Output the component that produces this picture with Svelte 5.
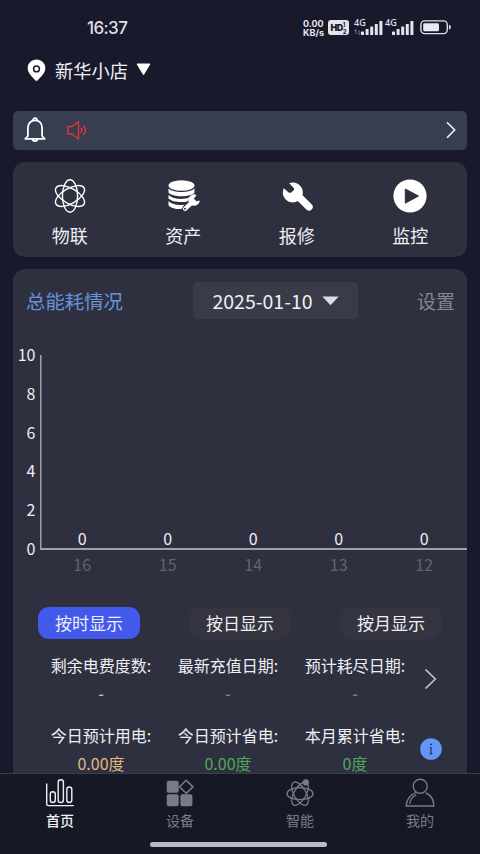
<script>
    let mode = $state('按时显示');
    let tab = $state('home');

    const menu = [
        { icon: 'atom', label: '物联' },
        { icon: 'asset', label: '资产' },
        { icon: 'repair', label: '报修' },
        { icon: 'monitor', label: '监控' },
    ];
    const ticks = [10, 8, 6, 4, 2, 0];
    const bars = [
        { hour: 16, value: 0 },
        { hour: 15, value: 0 },
        { hour: 14, value: 0 },
        { hour: 13, value: 0 },
        { hour: 12, value: 0 },
    ];
    const modes = ['按时显示', '按日显示', '按月显示'];
    const stats = [
        [
            { label: '剩余电费度数:', value: '-', warm: true },
            { label: '最新充值日期:', value: '-' },
            { label: '预计耗尽日期:', value: '-' },
        ],
        [
            { label: '今日预计用电:', value: '0.00度', warm: true },
            { label: '今日预计省电:', value: '0.00度' },
            { label: '本月累计省电:', value: '0度' },
        ],
    ];
    const tabs = [
        { id: 'home', label: '首页' },
        { id: 'device', label: '设备' },
        { id: 'smart', label: '智能' },
        { id: 'mine', label: '我的' },
    ];
</script>

{#snippet signal()}
    <svg width="22" height="14" viewBox="0 0 22 14" fill="#e3e4ec">
        <rect x="0" y="10.5" width="3" height="3.5" rx=".6" />
        <rect x="4.6" y="8" width="3" height="6" rx=".6" />
        <rect x="9.2" y="5.5" width="3" height="8.5" rx=".6" />
        <rect x="13.8" y="3" width="3" height="11" rx=".6" />
        <rect x="18.4" y="0" width="3" height="14" rx=".6" />
    </svg>
{/snippet}

<div class="screen">
    <header class="status">
        <span class="clock">16:37</span>
        <div class="status-icons">
            <div class="speed"><span>0.00</span><span>KB/s</span></div>
            <div class="hd"><b>HD</b><span class="sim"><i>1</i><i>2</i></span></div>
            <div class="net">
                <span class="gen">4G</span>
                <svg class="updown" width="7" height="6" viewBox="0 0 7 6" fill="none" stroke="#777987">
                    <path d="M.3 2 2 .5V5M6.7 4 5 5.5V1" />
                </svg>
                {@render signal()}
            </div>
            <div class="net second">
                <span class="gen">4G</span>
                {@render signal()}
            </div>
            <svg class="battery" width="32" height="15" viewBox="0 0 32 15">
                <rect x=".9" y=".9" width="26.4" height="12.7" rx="3.8" fill="none" stroke="#dfe0e8" stroke-width="1.4" />
                <rect x="3.2" y="3.2" width="15.8" height="8.1" rx="1.4" fill="#e9eaf0" />
                <path d="M29 4.8q1.8.4 1.8 2.4t-1.8 2.4z" fill="#dfe0e8" />
            </svg>
        </div>
    </header>

    <div class="shop">
        <svg width="19" height="23" viewBox="0 0 19 23">
            <path d="M9.5.6C4.5.6.7 4.2.7 9c0 5.2 4.6 9 7.3 12q1.5 1.7 3 0c2.7-3 7.3-6.8 7.3-12C18.3 4.2 14.5.6 9.5.6z" fill="#fff" />
            <circle cx="9.5" cy="9.9" r="2.9" fill="none" stroke="#1c1c2e" stroke-width="1.5" />
        </svg>
        <span>新华小店</span>
        <svg class="caret" width="15" height="13" viewBox="0 0 15 13">
            <path d="M1.5 1.2h12L7.5 11z" fill="#fff" stroke="#fff" stroke-width="1.5" stroke-linejoin="round" />
        </svg>
    </div>

    <div class="notice">
        <svg width="22" height="26" viewBox="0 0 22 26" fill="none" stroke="#fff" stroke-width="1.8" stroke-linejoin="round" stroke-linecap="round">
            <path d="M9 3.2a2 2 0 0 1 4 0" />
            <path d="M3.9 19V11C3.9 6.4 6.9 3.4 11 3.4s7.1 3 7.1 7.6v8l2.6 2.8H1.3z" />
            <path d="M8.6 22.8q2.4 2.6 4.8 0" />
        </svg>
        <svg class="horn" width="20" height="20" viewBox="0 0 20 20" fill="none" stroke="#e0363a" stroke-width="1.4" stroke-linejoin="round" stroke-linecap="round">
            <path d="M1 6.5h4.2l6.3-5v17.500l-6.300-5H1z" />
            <path d="M14 8q1.7 2.2 0 4.500M16.700 6q3.600 4.200 0 8.500" />
        </svg>
        <svg class="go" width="10" height="18" viewBox="0 0 10 18" fill="none" stroke="#f1f3f6" stroke-width="1.6">
            <path d="M1 1.3 8.7 9 1 16.7" />
        </svg>
    </div>

    <nav class="menu">
        {#each menu as item}
            <div class="menu-item">
                {#if item.icon === 'atom'}
                    <svg width="36" height="36" viewBox="-18 -18 36 36" fill="none" stroke="#fff" stroke-width="1.4">
                        <ellipse rx="7.6" ry="16.2" />
                        <ellipse rx="7.6" ry="16.2" transform="rotate(60)" />
                        <ellipse rx="7.6" ry="16.2" transform="rotate(120)" />
                    </svg>
                {:else if item.icon === 'asset'}
                    <svg width="36" height="36" viewBox="0 0 36 36" fill="#fff">
                        <ellipse cx="16.5" cy="7.5" rx="13" ry="5.3" />
                        <path d="M3.5 10.2c4 5 22 5 26 0v4.2c-4 5-22 5-26 0z" />
                        <path d="M3.5 16.8c4 4.7 15 5.2 21.5 2.5l-2.6 4.2c-6.5 1.3-15.4.6-18.9-2.9z" />
                        <path d="M3.5 23.1c3 3.3 10 4.5 16 3.7l-3.2 4.3c-5.5 0-10.8-1.2-12.8-3.9z" />
                        <path d="M20 31 28 23.5" stroke="#2f303f" stroke-width="6.5" />
                        <path d="m20 30.8 7-6.5" stroke="#fff" stroke-width="4.3" stroke-linecap="round" />
                        <path d="M31.5 16.9a5.7 5.7 0 1 0 3.3 5.6l-3.3.8-2.7-2.6z" />
                        <circle cx="20" cy="30.7" r="1" fill="#2f303f" />
                    </svg>
                {:else if item.icon === 'repair'}
                    <svg width="36" height="36" viewBox="0 0 36 36" fill="#fff">
                        <path d="m19 18 11 10.8" stroke="#fff" stroke-width="7.4" stroke-linecap="round" />
                        <path d="M10.2 5.2A10 10 0 1 1 4.8 10.2l5.2 4.6h2l3-2.8v-1.7z" />
                    </svg>
                {:else}
                    <svg width="36" height="36" viewBox="0 0 36 36">
                        <circle cx="18" cy="18" r="16.6" fill="#fff" />
                        <path d="M13.3 11v14.2L26.5 18z" fill="#2f303f" stroke="#2f303f" stroke-linejoin="round" />
                    </svg>
                {/if}
                <span>{item.label}</span>
            </div>
        {/each}
    </nav>

    <section class="energy">
        <div class="energy-head">
            <h2>总能耗情况</h2>
            <div class="date">
                2025-01-10
                <svg width="17" height="10" viewBox="0 0 17 10"><path d="M.3.5h16.4L8.5 9.3z" fill="#dcdde2" /></svg>
            </div>
            <span class="set">设置</span>
        </div>

        <div class="chart">
            <div class="y-axis">
                {#each ticks as tick}
                    <span>{tick}</span>
                {/each}
            </div>
            <div class="plot">
                <div class="bars">
                    {#each bars as bar}
                        <span>{bar.value}</span>
                    {/each}
                </div>
                <div class="x-axis">
                    {#each bars as bar}
                        <span>{bar.hour}</span>
                    {/each}
                </div>
            </div>
        </div>

        <div class="modes">
            {#each modes as m}
                <button class:active={mode === m} onclick={() => (mode = m)}>{m}</button>
            {/each}
        </div>

        {#each stats as row, i}
            <div class="stats">
                {#each row as stat}
                    <div class="stat">
                        <span>{stat.label}</span>
                        <em class:warm={stat.warm} class:empty={stat.value === '-'}>{stat.value}</em>
                    </div>
                {/each}
                <div class="more">
                    {#if i === 0}
                        <svg width="13" height="22" viewBox="0 0 13 22" fill="none" stroke="#c4c5cb" stroke-width="1.7">
                            <path d="M1.5 1.5 11.3 11 1.5 20.5" />
                        </svg>
                    {:else}
                        <svg width="22" height="22" viewBox="0 0 22 22">
                            <circle cx="11" cy="11" r="10.8" fill="#6296f8" />
                            <circle cx="11" cy="6.6" r="1" fill="#2b3550" />
                            <path d="M9.8 9.5H11v6.3M9.6 15.8h2.800" fill="none" stroke="#2b3550" stroke-width="1.2" />
                        </svg>
                    {/if}
                </div>
            </div>
        {/each}
    </section>

    <footer class="tabbar">
        <div class="tabs">
            {#each tabs as t}
                <button class:active={tab === t.id} onclick={() => (tab = t.id)}>
                    <svg width="30" height="30" viewBox="0 0 30 30" fill="none" stroke="currentColor" stroke-width="1.4" stroke-linecap="round" stroke-linejoin="round">
                        {#if t.id === 'home'}
                            <path d="M1.7 6v20q0 1.6 1.6 1.6h25" />
                            <rect x="5.3" y="13.7" width="5" height="10.8" rx="2.5" />
                            <rect x="13.2" y="1.7" width="5.2" height="22.8" rx="2.6" />
                            <rect x="21.8" y="9" width="5" height="15.5" rx="2.5" />
                        {:else if t.id === 'device'}
                            <g fill="currentColor" stroke="none">
                                <rect x="1.7" y="2.7" width="12" height="12" rx="2" />
                                <rect x="1.7" y="16.3" width="12" height="12" rx="2" />
                                <rect x="15.4" y="16.3" width="12" height="12" rx="2" />
                            </g>
                            <path d="m21.2 2.3 6.8 6.5-6.8 6.5-6.7-6.5z" stroke-width="1.6" />
                        {:else if t.id === 'smart'}
                            <g transform="translate(15 15.7)" stroke-width="1.3">
                                <ellipse rx="13" ry="6" />
                                <ellipse rx="13" ry="6" transform="rotate(60)" />
                                <ellipse rx="13" ry="6" transform="rotate(120)" />
                            </g>
                            <circle cx="20.8" cy="4.4" r="3.1" fill="currentColor" stroke="none" />
                        {:else}
                            <circle cx="15.2" cy="8.3" r="7" />
                            <path d="M10.5 14.8C5 16.5 1.3 22 1.2 28h27.700c-.1-6-3-10.600-7.800-13" />
                            <path d="M4.8 25.5c.5-3.800 2.700-6.800 6-8.300" />
                        {/if}
                    </svg>
                    <span>{t.label}</span>
                </button>
            {/each}
        </div>
        <div class="home-line"></div>
    </footer>
</div>

<style>
    :global(body) {
        margin: 0;
        background: #19192c;
    }
    .screen {
        display: flex;
        flex-direction: column;
        width: 480px;
        height: 854px;
        overflow: hidden;
        background: #19192c;
        color: #eeeff3;
        font-family: "Noto Sans CJK SC", sans-serif;
    }
    svg {
        display: block;
        flex: none;
    }
    button {
        padding: 0;
        border: 0;
        background: none;
        color: inherit;
        font: inherit;
    }

    /* status bar */
    .status {
        display: flex;
        align-items: center;
        justify-content: space-between;
        height: 55px;
        padding: 0 28px 0 87px;
        flex: none;
    }
    .clock {
        font: 500 17px/20px Inter, sans-serif;
        letter-spacing: -0.6px;
        color: #dedfe9;
    }
    .status-icons {
        display: flex;
        align-items: center;
        color: #e3e4ec;
    }
    .speed {
        display: flex;
        flex-direction: column;
        width: 22px;
        margin-right: 3px;
        font: 700 9px/9px Inter, sans-serif;
        white-space: nowrap;
    }
    .hd {
        display: flex;
        align-items: center;
        justify-content: center;
        width: 21px;
        height: 15px;
        margin-right: 5px;
        border-radius: 3px;
        background: #e3e4ec;
        color: #19192c;
        font: 700 9px/15px Inter, sans-serif;
    }
    .hd b {
        letter-spacing: -0.4px;
    }
    .sim {
        display: flex;
        flex-direction: column;
    }
    .sim i {
        font: 700 6px/7px Inter, sans-serif;
    }
    .net {
        position: relative;
        display: flex;
        align-items: flex-end;
        justify-content: flex-end;
        width: 29px;
        height: 15px;
        margin-right: 2px;
    }
    .net.second {
        margin-right: 6px;
    }
    .gen {
        position: absolute;
        top: -2px;
        left: 0;
        font: 500 9px/10px "Noto Sans", sans-serif;
    }
    .updown {
        position: absolute;
        left: 0;
        bottom: 0;
    }

    /* shop picker */
    .shop {
        display: flex;
        align-items: center;
        height: 30px;
        padding-left: 27px;
        flex: none;
        font-size: 18.3px;
    }
    .shop span {
        margin: 0 8px 0 9px;
    }
    .caret {
        margin-bottom: 2px;
    }

    /* notice */
    .notice {
        display: flex;
        align-items: center;
        height: 38.5px;
        margin: 26px 13px 0;
        padding: 0 11px;
        border-radius: 5px;
        background: #363e50;
        flex: none;
    }
    .horn {
        margin-left: 21px;
    }
    .go {
        margin-left: auto;
    }

    /* shortcuts */
    .menu {
        display: flex;
        height: 95.5px;
        margin: 12px 13px 0;
        border-radius: 12px;
        background: #2f303f;
        flex: none;
    }
    .menu-item {
        display: flex;
        flex: 1;
        flex-direction: column;
        align-items: center;
        padding-top: 16px;
        font-size: 18px;
        line-height: 26px;
    }
    .menu-item span {
        margin-top: 8px;
    }

    /* energy card */
    .energy {
        flex: 1;
        min-height: 0;
        overflow: hidden;
        margin: 12px 13px 0;
        border-radius: 12px 12px 0 0;
        background: #2f303f;
    }
    .energy-head {
        display: flex;
        align-items: center;
        justify-content: space-between;
        height: 37px;
        padding: 13px 12px 0 13px;
    }
    h2 {
        margin: 0;
        font-size: 19.4px;
        font-weight: 400;
        color: #6694dc;
    }
    .date {
        display: flex;
        align-items: center;
        justify-content: space-between;
        box-sizing: border-box;
        width: 165px;
        height: 37px;
        margin-left: 12px;
        padding: 0 19px;
        border-radius: 5px;
        background: #3a3b49;
        font-size: 19.5px;
    }
    .set {
        font-size: 19px;
        color: #85868f;
    }

    .chart {
        display: flex;
        margin-top: 36px;
        font-size: 16px;
        line-height: 20px;
    }
    .y-axis {
        display: flex;
        flex-direction: column;
        justify-content: space-between;
        width: 22.5px;
        height: 214px;
        margin: -11px 4px 0 0;
        text-align: right;
    }
    .plot {
        flex: 1;
    }
    .bars {
        display: flex;
        align-items: flex-end;
        box-sizing: border-box;
        height: 195px;
        border-bottom: 2px solid #a0a1a6;
        box-shadow: inset 1.5px 0 #a0a1a6;
    }
    .bars span,
    .x-axis span {
        flex: 1;
        text-align: center;
    }
    .x-axis {
        display: flex;
        padding-top: 4px;
        color: #62636c;
    }

    .modes {
        display: flex;
        justify-content: space-between;
        margin: 33px 25px 0;
    }
    .modes button {
        width: 102px;
        height: 32px;
        border-radius: 11px;
        background: #343541;
        font-size: 17px;
        line-height: 32px;
    }
    .modes button.active {
        background: #4259ec;
    }

    .stats {
        display: flex;
        height: 70px;
        padding-left: 24.5px;
    }
    .modes + .stats {
        padding-top: 14px;
    }
    .stat {
        display: flex;
        flex-direction: column;
        align-items: center;
        width: 127px;
        font-size: 16px;
        line-height: 24px;
        white-space: nowrap;
    }
    .stat em {
        margin-top: 4px;
        font-style: normal;
        color: #50a75c;
    }
    .stat em.warm {
        color: #dfba82;
    }
    .stat em.empty {
        font-weight: 500;
    }
    .more {
        display: flex;
        justify-content: center;
        width: 24px;
        padding-top: 15px;
    }

    /* tab bar */
    .tabbar {
        box-sizing: border-box;
        height: 81px;
        border-top: 1px solid #3c3d4a;
        background: #171826;
        flex: none;
    }
    .tabs {
        display: flex;
        height: 68px;
    }
    .tabs button {
        display: flex;
        flex: 1;
        flex-direction: column;
        align-items: center;
        padding-top: 4px;
        color: #797b87;
    }
    .tabs span {
        margin-top: 2px;
        font-size: 14px;
        line-height: 20px;
    }
    .tabs button.active {
        color: #eeeff3;
    }
    .tabs button.active span {
        font-weight: 500;
    }
    .home-line {
        width: 177px;
        height: 5px;
        margin: 0 0 0 150px;
        border-radius: 3px;
        background: #b8bcc5;
    }
</style>
